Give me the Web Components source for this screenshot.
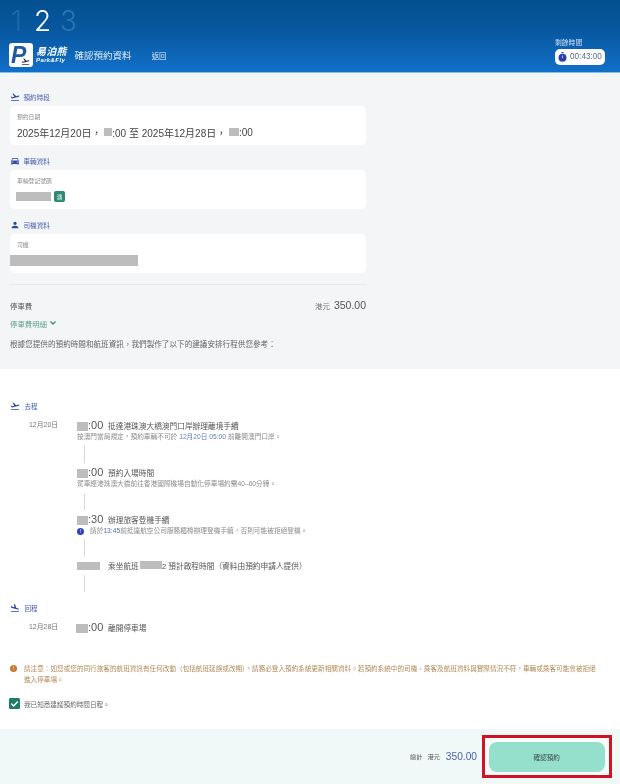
<!DOCTYPE html>
<html lang="zh-Hant"><head><meta charset="utf-8"><title>確認預約資料</title>
<style>
html,body{margin:0;padding:0;background:#fff}
body{width:620px;height:784px;overflow:hidden;font-family:"Liberation Sans","Noto Sans CJK TC",sans-serif;color:#444}
</style></head><body>
<pf-app></pf-app>
<script>
const IC={
 takeoff:'M2.5 19h19v2h-19zm19.57-9.36c-.21-.8-1.04-1.28-1.84-1.06L14.92 10l-6.9-6.43-1.93.51 4.14 7.17-4.97 1.33-1.97-1.54-1.45.39 2.59 4.49s7.12-1.9 16.57-4.43c.81-.23 1.28-1.05 1.07-1.85z',
 land:'M2.5 19h19v2h-19zm7.18-5.73l4.35 1.16 5.31 1.42c.8.21 1.62-.26 1.84-1.06.21-.8-.26-1.62-1.06-1.84l-5.31-1.42-2.76-9.02L10.12 2v8.28L5.15 8.95l-.93-2.32-1.45-.39v5.17l1.6.43 5.31 1.43z',
 car:'M18.92 6.01C18.72 5.42 18.16 5 17.5 5h-11c-.66 0-1.21.42-1.42 1.01L3 12v8c0 .55.45 1 1 1h1c.55 0 1-.45 1-1v-1h12v1c0 .55.45 1 1 1h1c.55 0 1-.45 1-1v-8l-2.08-5.99zM6.5 16c-.83 0-1.5-.67-1.5-1.5S5.67 13 6.5 13s1.5.67 1.5 1.5S7.33 16 6.5 16zm11 0c-.83 0-1.5-.67-1.5-1.5s.67-1.5 1.5-1.5 1.5.67 1.5 1.5-.67 1.5-1.5 1.5zM5 11l1.5-4.5h11L19 11H5z',
 person:'M12 12c2.21 0 4-1.79 4-4s-1.79-4-4-4-4 1.79-4 4 1.79 4 4 4zm0 2c-2.67 0-8 1.34-8 4v2h16v-2c0-2.66-5.33-4-8-4z'
};
const def=(n,css,html)=>customElements.define(n,class extends HTMLElement{
 connectedCallback(){ if(this.shadowRoot)return; const s=this.attachShadow({mode:'open'});
  s.innerHTML='<style>'+css+'</style>'+(typeof html==='function'?html(this):html); }
});
def('pf-icon',':host{display:inline-flex;color:#2b4aa0}svg{display:block;width:100%;height:100%;fill:currentColor}',
 h=>`<svg viewBox="0 0 24 24"><path d="${IC[h.getAttribute('name')]}"/></svg>`);
def('pf-redact',':host{display:inline-block;background:#bdbdbd;height:var(--h,9px);width:var(--w,11px);vertical-align:middle}','');
def('pf-logo',`:host{display:flex;align-items:center;gap:3px}
 .tile{width:24px;height:24px;background:#fff;border-radius:3px;position:relative;flex:none}
 .p{position:absolute;left:2px;top:0;font:italic 700 23px/24px "Liberation Sans",sans-serif;color:#1f5a9e}
 svg{position:absolute;left:11px;top:14px;width:11px;height:9px;fill:#2a3a50}
 .t{display:flex;flex-direction:column;color:#fff;font-style:italic;font-weight:700}
 .a{font-size:10px;line-height:11px;letter-spacing:.2px}.b{font-size:6px;line-height:7px;letter-spacing:.4px}`,
 `<span class="tile"><span class="p">P</span><svg viewBox="0 0 24 24"><path d="${IC.takeoff}"/></svg></span><span class="t"><span class="a">易泊熊</span><span class="b">Park&amp;Fly</span></span>`);
def('pf-timer',`:host{display:flex;flex-direction:column;gap:2px;align-items:flex-start}
 .l{font-size:6.8px;line-height:9px;color:#cfe0f2}
 .p{display:flex;align-items:center;gap:3px;background:#fff;border-radius:5px;height:16px;width:50px;box-sizing:border-box;padding-left:3px;color:#5d6a8e;font-size:8.2px}
 svg{width:9px;height:10px;flex:none}`,
 `<span class="l">剩餘時間</span><span class="p"><svg viewBox="0 0 18 20"><rect x="7" y="0" width="4" height="2.5" fill="#2b3fb0"/><circle cx="9" cy="11.5" r="8" fill="#2b3fb0"/><rect x="8.3" y="7" width="1.4" height="5" fill="#fff"/></svg>00:43:00</span>`);
def('pf-header',`:host{display:block;height:72px;border-bottom:1px solid #7fc0ea;background:linear-gradient(180deg,#04508f 0%,#07579e 40%,#1270c9 100%);color:#fff}
 .steps{display:flex;gap:9px;padding:5px 0 0 8px;height:35px;box-sizing:border-box;font:300 28px/32px Inter,"Liberation Sans",sans-serif}
 .steps span{color:#fff;width:17px;text-align:center}.steps .off{color:#2c73b5}.steps .off1{color:#1e69ad}
 .row{display:flex;align-items:center;padding:8px 15px 0 9px}
 .title{font-size:9.5px;margin-left:8px;color:#dfeaf6}.back{font-size:7.5px;margin-left:20px;color:#dfeaf6}
 pf-timer{margin-left:auto;margin-top:-8px}`,
 `<div class="steps"><span class="off1">1</span><span>2</span><span class="off">3</span></div>
  <div class="row"><pf-logo></pf-logo><span class="title">確認預約資料</span><span class="back">返回</span><pf-timer></pf-timer></div>`);
def('pf-head',`:host{display:flex;align-items:center;gap:4px;height:12px;color:#4a5fae;font-size:6.6px}
 pf-icon{width:10px;height:10px;margin-left:-.5px}`,
 h=>`<pf-icon name="${h.getAttribute('icon')}"></pf-icon><slot></slot>`);
def('pf-card',`:host{display:block;background:#fff;border-radius:5px;height:39px;box-sizing:border-box;padding:7px 7px 0;margin-top:3px;color:#333}
 .l{font-size:5.8px;line-height:9px;color:#8a8a8a}.v{display:flex;align-items:center;height:16px;margin-top:2px;font-size:10px;color:#444}`,
 h=>`<div class="l">${h.getAttribute('label')}</div><div class="v"><slot></slot></div>`);
def('pf-timeline-item',`:host{display:block;margin-left:77px}
 .h{display:flex;align-items:center;height:14px;font-size:7.7px;color:#555}
 .t{width:31px;font-size:11px;flex:none;display:flex;align-items:center;color:#555}
 .s{font-size:6.7px;line-height:10px;height:10px;color:#8d8d8d;white-space:nowrap;display:flex;align-items:center}
 .c{width:1px;background:#d6d6d6;margin:var(--ct,3px) 0 var(--cb,3px) 7px;height:var(--ch,18px)}
 :host([nosub]) .s{display:none}:host([noline]) .c{display:none}`,
 `<div class="h"><span class="t"><slot name="time"></slot></span><slot></slot></div><div class="s"><slot name="sub"></slot></div><div class="c"></div>`);
def('pf-summary',`:host{display:block;background:#f3f5f7;height:296px;box-sizing:border-box;padding:18px 254px 0 10px;font-size:7.4px;color:#555}
 .rule{height:1px;background:#e6e8ea;margin:11px 0 0}
 .fee{display:flex;justify-content:space-between;align-items:center;height:16px;margin-top:12px}
 .fee b{font-weight:400;font-size:10.5px;margin-left:4px;color:#555}.cur{color:#777;font-size:7.4px}
 .det{color:#5fa08e;margin-top:4px;height:12px;display:flex;align-items:center;gap:3px}
 .det svg{width:6px;height:4px;fill:none;stroke:#3f8a76;stroke-width:1.3}
 .msg{margin-top:10px;line-height:12px;color:#666;font-size:7.6px}
 pf-card+pf-head{margin-top:10px}`,
 `<pf-head icon="takeoff">預約時段</pf-head>
  <pf-card label="預約日期"><span style="display:flex;align-items:center;white-space:pre">2025年12月20日， <pf-redact style="--w:8px;--h:8px"></pf-redact>:00 至 2025年12月28日， <pf-redact style="--w:10px;--h:8px"></pf-redact>:00</span></pf-card>
  <pf-head icon="car">車輛資料</pf-head>
  <pf-card label="車輛登記號碼"><pf-redact style="--w:35px;--h:9px;margin-left:-1px;margin-right:3px"></pf-redact><pf-badge>澳</pf-badge></pf-card>
  <pf-head icon="person">司機資料</pf-head>
  <pf-card label="司機"><pf-redact style="--w:128px;--h:11px;margin-left:-7px"></pf-redact></pf-card>
  <div class="rule"></div>
  <div class="fee"><span>停車費</span><span><span class="cur">港元</span><b>350.00</b></span></div>
  <div class="det">停車費明細<svg viewBox="0 0 6 4"><path d="M.5 .5 3 3l2.5-2.5"/></svg></div>
  <div class="msg">根據您提供的預約時間和航班資訊，我們製作了以下的建議安排行程供您參考：</div>`);
def('pf-badge',':host{display:inline-flex;align-items:center;justify-content:center;width:11px;height:11px;border-radius:2px;background:#2a8a72;color:#eaf6f2;font-size:6px}','<slot></slot>');
def('pf-date',':host{display:block;margin-left:29px;width:0;height:0;white-space:nowrap;font-size:6.9px;line-height:14px;color:#777}','<slot></slot>');
def('pf-schedule',`:host{display:block;padding-top:31px}
 pf-head{margin-left:10px;font-size:6.6px;gap:5px}
 .g{margin-top:6px}
 .blue{color:#5f7fb8}
 .i{display:inline-flex;align-items:center;justify-content:center;width:7px;height:7px;border-radius:50%;background:#2b45c0;color:#fff;font-size:5px;margin-right:6px;font-family:"Liberation Sans",sans-serif}
 .n{color:#4d6fb5}`,
 `<pf-head icon="takeoff">去程</pf-head>
  <div class="g"><pf-date>12月20日</pf-date>
   <pf-timeline-item style="--ch:18px;--cb:2px"><span slot="time"><pf-redact style="--w:11px"></pf-redact>:00</span>抵達港珠澳大橋澳門口岸辦理離境手續<span slot="sub">按澳門當局規定，預約車輛不可於&nbsp;<span class="blue">12月20日 05:00</span>&nbsp;前離開澳門口岸。</span></pf-timeline-item>
   <pf-timeline-item style="--ct:5px;--ch:16px;--cb:2px"><span slot="time"><pf-redact style="--w:11px"></pf-redact>:00</span>預約入場時間<span slot="sub">駕車經港珠澳大橋前往香港國際機場自動化停車場約需40–60分鐘。</span></pf-timeline-item>
   <pf-timeline-item style="--ct:3px;--ch:17px;--cb:2px"><span slot="time"><pf-redact style="--w:11px"></pf-redact>:30</span>辦理旅客登機手續<span slot="sub"><span class="i">!</span>請於<span class="n">13:45</span>前抵達航空公司服務櫃檯辦理登機手續，否則可能被拒絕登機。</span></pf-timeline-item>
   <pf-timeline-item nosub style="--ct:3px;--ch:17px;--cb:0px"><span slot="time"><pf-redact style="--w:23px;--h:8px"></pf-redact></span>乘坐航班&nbsp;<pf-redact style="--w:22px;--h:8px;margin-left:-1px"></pf-redact>2&nbsp;預計啟程時間（資料由預約申請人提供）</pf-timeline-item>
  </div>
  <pf-head style="margin-top:10px" icon="land">回程</pf-head>
  <div class="g"><pf-date>12月28日</pf-date>
   <pf-timeline-item nosub noline><span slot="time"><pf-redact style="--w:12px;margin-left:-1px"></pf-redact>:00</span>離開停車場</pf-timeline-item>
  </div>`);
def('pf-notice',`:host{display:flex;gap:7px;margin:29px 18px 0 10px;color:#b08a5a;font-size:6.62px;line-height:11px}
 .i{flex:none;width:7px;height:7px;border-radius:50%;background:#c8792a;color:#fff;font-size:5px;line-height:7px;text-align:center;margin-top:2px}`,
 '<span class="i">!</span><span><slot></slot></span>');
def('pf-check',`:host{display:flex;align-items:center;gap:4px;margin:13px 0 0 9px;font-size:6.6px;color:#666}
 svg{width:11px;height:11px;display:block}`,
 '<svg viewBox="0 0 11 11"><rect width="11" height="11" rx="1.5" fill="#1f7a68"/><path d="M2.3 5.6 4.6 7.9 8.8 3.4" fill="none" stroke="#fff" stroke-width="1.4"/></svg><slot></slot>');
def('pf-footer',`:host{position:absolute;left:0;top:729px;width:620px;height:55px;background:#f0f9f7;display:flex;justify-content:flex-end;align-items:flex-start;box-sizing:border-box;padding:6px 8px 0 0;font-size:6.2px;color:#555}
 .tot{display:flex;align-items:center;gap:5px;height:43px;margin-right:5px}
 .tot b{font-weight:400;font-size:10.2px;color:#4a62a8;margin-left:1px}
 .red{box-sizing:border-box;width:130px;height:43px;border:3.5px solid #cf1424;background:#f7fbfa;padding:3.5px 4px 0 3.5px}
 .btn{height:30px;border-radius:8px;background:#94e0cc;display:flex;align-items:center;justify-content:center;color:#3b4a48;font-size:6.6px}`,
 `<div class="tot"><span>總計</span><span>港元</span><b>350.00</b></div><div class="red"><div class="btn">確認預約</div></div>`);
def('pf-app',`:host{display:block;width:620px;height:784px;position:relative;overflow:hidden;background:#fff;filter:blur(.3px)}`,
 `<pf-header></pf-header><pf-summary></pf-summary><pf-schedule></pf-schedule>
  <pf-notice>請注意：如您或您的同行旅客的航班資訊有任何改動（包括航班延誤或改期），請務必登入預約系統更新相關資料。若預約系統中的司機、乘客及航班資料與實際情況不符，車輛或乘客可能會被拒絕進入停車場。</pf-notice>
  <pf-check>我已知悉建議預約時間日程。</pf-check>
  <pf-footer></pf-footer>`);
</script></body></html>
